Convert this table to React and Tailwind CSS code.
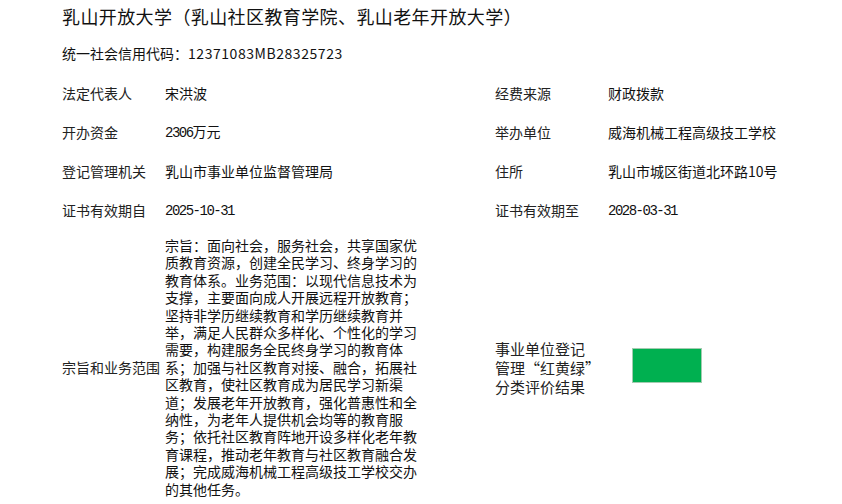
const cn = { fontFamily: '"Noto Sans CJK SC", "Noto Sans", sans-serif' };
const mono = { fontFamily: '"Liberation Mono", "DejaVu Sans Mono", monospace' };

const Label = ({ children }) => (
  <div className="text-[14px] text-[#222]" style={cn}>{children}</div>
);

const Value = ({ children }) => (
  <div className="text-[14px] text-[#111]" style={cn}>{children}</div>
);

const Num = ({ children }) => (
  <span className="text-[14px] tracking-[-1.5px]" style={mono}>{children}</span>
);

export default function App() {
  return (
    <div className="w-[842px] h-[504px] bg-white pl-[62px] overflow-hidden" style={cn}>
      {/* Header */}
      <div className="h-[32px] flex items-center text-[18px] tracking-[0.4px] text-[#111]">
        乳山开放大学（乳山社区教育学院、乳山老年开放大学）
      </div>
      <div className="h-[42px] flex items-center text-[14px] text-[#111]">
        统一社会信用代码：<span className="tracking-[0.55px]">12371083MB28325723</span>
      </div>

      {/* Info grid */}
      <div className="grid grid-cols-[103px_330px_113px_1fr] auto-rows-[39px] items-center">
        <Label>法定代表人</Label>
        <Value>宋洪波</Value>
        <Label>经费来源</Label>
        <Value>财政拨款</Value>

        <Label>开办资金</Label>
        <Value><Num>2306</Num>万元</Value>
        <Label>举办单位</Label>
        <Value>威海机械工程高级技工学校</Value>

        <Label>登记管理机关</Label>
        <Value>乳山市事业单位监督管理局</Value>
        <Label>住所</Label>
        <Value>乳山市城区街道北环路10号</Value>

        <Label>证书有效期自</Label>
        <Value><Num>2025-10-31</Num></Value>
        <Label>证书有效期至</Label>
        <Value><Num>2028-03-31</Num></Value>
      </div>

      <div className="grid grid-cols-[103px_330px_113px_1fr] items-center pt-[7px]">
        <Label>宗旨和业务范围</Label>
        <p className="w-[256px] text-[14px] leading-[17.4px] text-[#111]">
          宗旨：面向社会，服务社会，共享国家优质教育资源，创建全民学习、终身学习的教育体系。业务范围：以现代信息技术为支撑，主要面向成人开展远程开放教育；坚持非学历继续教育和学历继续教育并举，满足人民群众多样化、个性化的学习需要，构建服务全民终身学习的教育体系；加强与社区教育对接、融合，拓展社区教育，使社区教育成为居民学习新渠道；发展老年开放教育，强化普惠性和全纳性，为老年人提供机会均等的教育服务；依托社区教育阵地开设多样化老年教育课程，推动老年教育与社区教育融合发展；完成威海机械工程高级技工学校交办的其他任务。
        </p>
        <div className="text-[15px] leading-[19px] text-[#222] whitespace-nowrap">
          事业单位登记<br />管理“红黄绿”<br />分类评价结果
        </div>
        <div className="pl-[24px] mb-[5px]">
          <div className="w-[70px] h-[35px] bg-[#00b050] border border-[#a3cbb0]" />
        </div>
      </div>
    </div>
  );
}
